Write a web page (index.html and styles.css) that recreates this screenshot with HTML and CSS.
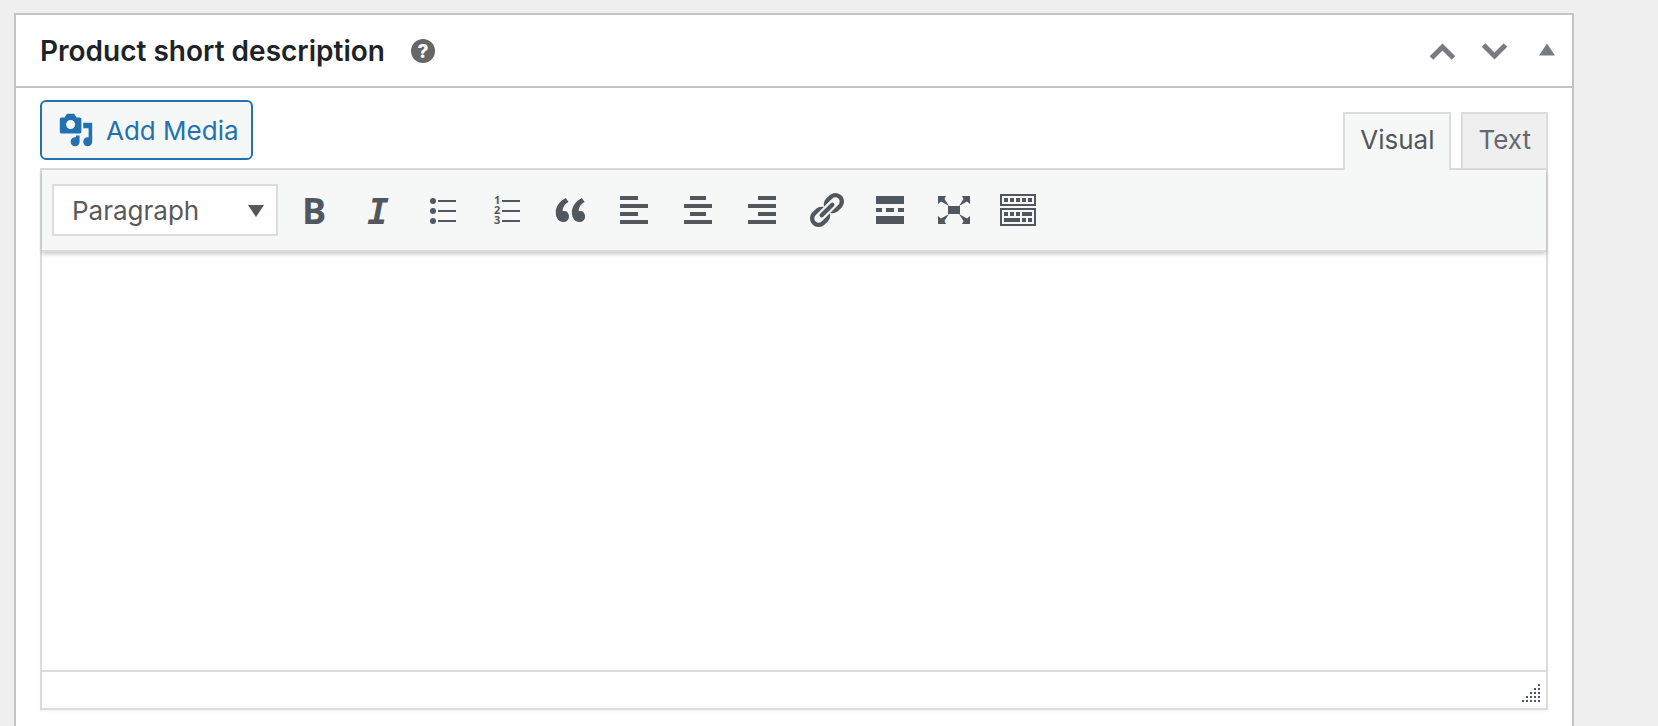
FILE: index.html
```html
<!DOCTYPE html>
<html lang="en">
<head>
    <meta charset="UTF-8">
    <meta name="viewport" content="width=device-width, initial-scale=1.0">
    <title>Product short description</title>
    <link rel="stylesheet" href="styles.css">
</head>
<body>
    <section class="postbox">
        <header class="postbox-header">
            <h2>Product short description</h2>
            <button type="button" class="help-tip" aria-label="Help">
                <svg width="24" height="24" viewBox="0 0 24 24">
                    <circle cx="12" cy="12" r="12"/>
                    <text x="12" y="19" text-anchor="middle">?</text>
                </svg>
            </button>
            <div class="handle-actions">
                <button type="button" aria-label="Move up">
                    <svg width="40" height="40" viewBox="0 0 40 40"><path d="M8.500 27L19.500 16l11 11" class="chevron"/></svg>
                </button>
                <button type="button" aria-label="Move down">
                    <svg width="40" height="40" viewBox="0 0 40 40"><path d="M8.500 14L19.500 25l11-11" class="chevron"/></svg>
                </button>
                <button type="button" aria-label="Toggle panel">
                    <svg width="40" height="40" viewBox="0 0 40 40"><path d="M12 24.500l8-12 8 12z"/></svg>
                </button>
            </div>
        </header>

        <div class="inside">
            <div class="editor-tools">
                <button type="button" class="add-media">
                    <svg width="36" height="36" viewBox="0 0 20 20"><path fill-rule="evenodd" d="M13 11V4c0-.55-.45-1-1-1h-1.670L9 1H5L3.670 3H2c-.55 0-1 .45-1 1v7c0 .55.45 1 1 1h10c.55 0 1-.45 1-1zM7 4.500c1.380 0 2.500 1.120 2.500 2.500S8.380 9.500 7 9.500 4.500 8.380 4.500 7 5.620 4.500 7 4.500zM14 6h5v10.500c0 1.380-1.120 2.500-2.500 2.500S14 17.880 14 16.500s1.120-2.500 2.500-2.500c.17 0 .34.020.5.050V9h-3V6zm-4 8.050V13h2v3.500c0 1.380-1.120 2.500-2.500 2.500S7 17.880 7 16.500 8.120 14 9.500 14c.17 0 .34.020.5.050z"/></svg>
                    Add Media
                </button>
                <div class="editor-tabs">
                    <button type="button" class="tab active">Visual</button>
                    <button type="button" class="tab">Text</button>
                </div>
            </div>

            <div class="editor">
                <div class="toolbar">
                    <div class="format">
                        <select aria-label="Format">
                            <option>Paragraph</option>
                            <option>Heading 1</option>
                            <option>Heading 2</option>
                        </select>
                        <svg width="16" height="12" viewBox="0 0 16 12"><path d="M0 0h16L8 12z"/></svg>
                    </div>
                    <button type="button" aria-label="Bold">
                        <svg width="40" height="40" viewBox="0 0 40 40"><text x="20" y="34" text-anchor="middle" class="bold">B</text></svg>
                    </button>
                    <button type="button" aria-label="Italic">
                        <svg width="40" height="40" viewBox="0 0 40 40"><text x="20" y="34" text-anchor="middle" class="italic">I</text></svg>
                    </button>
                    <button type="button" aria-label="Bulleted list">
                        <svg width="40" height="40" viewBox="0 0 40 40">
                            <circle cx="11" cy="11" r="3"/><circle cx="11" cy="21" r="3"/><circle cx="11" cy="31" r="3"/>
                            <path d="M16 10h18v2H16zM16 20h18v2H16zM16 30h18v2H16z"/>
                        </svg>
                    </button>
                    <button type="button" aria-label="Numbered list">
                        <svg width="40" height="40" viewBox="0 0 40 40">
                            <text x="8" y="14" class="digit">1</text><text x="8" y="24" class="digit">2</text><text x="8" y="34" class="digit">3</text>
                            <path d="M16 10h18v2H16zM16 20h18v2H16zM16 30h18v2H16z"/>
                        </svg>
                    </button>
                    <button type="button" aria-label="Blockquote">
                        <svg width="40" height="40" viewBox="0 0 20 20"><path d="M9.490 13.220c0-.74-.2-1.380-.61-1.900-.62-.78-1.830-.88-2.530-.72-.29-1.650 1.110-3.750 2.920-4.650L7.880 4c-2.730 1.300-5.420 4.280-4.960 8.050C3.210 14.430 4.590 16 6.540 16c.85 0 1.560-.25 2.120-.75s.83-1.180.83-2.030zm8.050 0c0-.74-.2-1.380-.61-1.900-.63-.78-1.830-.88-2.530-.72-.29-1.650 1.110-3.750 2.920-4.650L15.930 4c-2.730 1.300-5.410 4.280-4.950 8.050.28 2.380 1.660 3.950 3.610 3.950.85 0 1.560-.25 2.120-.75s.83-1.180.83-2.030z"/></svg>
                    </button>
                    <button type="button" aria-label="Align left">
                        <svg width="40" height="40" viewBox="0 0 40 40"><path d="M6 6h18v4H6zM6 14h28v4H6zM6 22h18v4H6zM6 30h28v4H6z"/></svg>
                    </button>
                    <button type="button" aria-label="Align center">
                        <svg width="40" height="40" viewBox="0 0 40 40"><path d="M12 6h16v4H12zM6 14h28v4H6zM12 22h16v4H12zM6 30h28v4H6z"/></svg>
                    </button>
                    <button type="button" aria-label="Align right">
                        <svg width="40" height="40" viewBox="0 0 40 40"><path d="M16 6h18v4H16zM6 14h28v4H6zM16 22h18v4H16zM6 30h28v4H6z"/></svg>
                    </button>
                    <button type="button" aria-label="Insert link">
                        <svg width="40" height="40" viewBox="0 0 20 20"><path d="M17.740 2.760c1.680 1.690 1.680 4.410 0 6.100l-1.530 1.520c-1.120 1.120-2.700 1.470-4.140 1.090l2.620-2.610.76-.77.76-.76c.84-.84.84-2.200 0-3.040-.84-.85-2.200-.85-3.040 0l-.77.76-3.380 3.380c-.37-1.440-.02-3.020 1.100-4.140l1.520-1.530c1.690-1.680 4.420-1.680 6.100 0zM8.590 13.430l5.340-5.340c.42-.42.42-1.100 0-1.520-.44-.43-1.130-.39-1.530 0l-5.330 5.340c-.42.42-.42 1.100 0 1.520.44.43 1.130.39 1.520 0zm-.76 2.290l4.140-4.150c.38 1.440.03 3.020-1.090 4.140l-1.520 1.530c-1.690 1.680-4.410 1.680-6.100 0-1.680-1.680-1.680-4.420 0-6.100l1.530-1.520c1.120-1.120 2.700-1.470 4.140-1.100l-4.140 4.150c-.85.84-.85 2.200 0 3.050.84.84 2.200.84 3.040 0z"/></svg>
                    </button>
                    <button type="button" aria-label="Insert Read More tag">
                        <svg width="40" height="40" viewBox="0 0 40 40"><path d="M6 6h28v8H6zM6 18h6v4H6zM16 18h8v4h-8zM28 18h6v4h-6zM6 26h28v8H6z"/></svg>
                    </button>
                    <button type="button" aria-label="Fullscreen">
                        <svg width="40" height="40" viewBox="0 0 40 40"><path d="M14 16h12v8H14zM4 6h8l-1.500 3L15 16l-8-4.500L4 14zM36 6h-8l1.500 3L25 16l8-4.500 3 2.500zM4 34h8l-1.500-3L15 24l-8 4.500L4 26zM36 34h-8l1.500-3L25 24l8 4.500 3-2.500z"/></svg>
                    </button>
                    <button type="button" aria-label="Toolbar Toggle">
                        <svg width="40" height="40" viewBox="0 0 40 40">
                            <path fill-rule="evenodd" d="M2 4h36v12H2zM4 6v8h32V6zM2 18h36v18H2zM4 20v14h32V20z"/>
                            <path d="M6 8h4v4H6zM12 8h4v4h-4zM18 8h4v4h-4zM24 8h4v4h-4zM30 8h4v4h-4zM6 22h4v4H6zM12 22h4v4h-4zM18 22h4v4h-4zM24 22h10v4H24zM6 28h16v4H6zM24 28h4v4h-4zM30 28h4v4h-4z"/>
                        </svg>
                    </button>
                </div>
                <textarea class="content" aria-label="Product short description"></textarea>
                <div class="statusbar">
                    <svg width="18" height="18" viewBox="0 0 18 18"><path d="M16 0h2v2h-2zM12 4h2v2h-2zM16 4h2v2h-2zM8 8h2v2H8zM12 8h2v2h-2zM16 8h2v2h-2zM4 12h2v2H4zM8 12h2v2H8zM12 12h2v2h-2zM16 12h2v2h-2zM0 16h2v2H0zM4 16h2v2H4zM8 16h2v2H8zM12 16h2v2h-2zM16 16h2v2h-2z"/></svg>
                </div>
            </div>
        </div>
    </section>
</body>
</html>
```
FILE: styles.css
```css
* {
    box-sizing: border-box;
}
html {
    height: 100%;
}
body {
    min-height: 100%;
    margin: 0;
    padding: 13px 84px 0 14px;
    display: flex;
    background: #efefef;
    color: #1d2327;
    font-family: Inter, "Liberation Sans", sans-serif;
    font-size: 26px;
}
button, select, textarea {
    font: inherit;
    color: inherit;
}
button {
    padding: 0;
    border: 0;
    background: none;
    cursor: pointer;
}
svg {
    display: block;
    overflow: visible;
    fill: currentColor;
}
.postbox {
    flex: 1;
    border: 2px solid #c3c4c7;
    border-bottom: 0;
    background: #fff;
}
.postbox-header {
    display: flex;
    align-items: center;
    height: 73px;
    padding-left: 24px;
    border-bottom: 2px solid #c3c4c7;
}
.postbox-header h2 {
    margin: 0;
    font-size: 28px;
    font-weight: 600;
    line-height: 40px;
}
.help-tip {
    margin-left: 26px;
    color: #666;
}
.help-tip text {
    fill: #fff;
    font-size: 19px;
    font-weight: 800;
}
.handle-actions {
    display: flex;
    gap: 12px;
    margin-left: auto;
    padding-right: 5px;
    color: #787c82;
}
.chevron {
    fill: none;
    stroke: currentColor;
    stroke-width: 5;
}
.inside {
    padding: 12px 24px 16px;
}
.editor-tools {
    display: flex;
    justify-content: space-between;
    align-items: flex-start;
}
.add-media {
    display: flex;
    align-items: center;
    gap: 12px;
    height: 60px;
    margin-bottom: 8px;
    padding: 0 12px 0 16px;
    border: 2px solid #2271b1;
    border-radius: 6px;
    background: #f6f7f7;
    color: #2271b1;
}
.editor-tabs {
    display: flex;
    align-self: flex-end;
    gap: 10px;
}
.tab {
    height: 56px;
    padding: 0 15px 4px;
    border: 2px solid #dcdcde;
    border-bottom: 0;
    background: #efefef;
    color: #646970;
}
/* the active tab runs over the toolbar's top border */
.tab.active {
    position: relative;
    z-index: 1;
    height: 58px;
    margin-bottom: -2px;
    padding-bottom: 6px;
    background: #f6f7f7;
    color: #50575e;
}
.editor {
    border: 2px solid #dcdcdc;
    box-shadow: 0 2px 2px rgba(0, 0, 0, 0.04);
}
.toolbar {
    display: flex;
    align-items: center;
    gap: 4px;
    height: 82px;
    padding: 0 10px;
    border-bottom: 2px solid #dcdcdc;
    background: #f6f7f7;
    box-shadow: 0 2px 4px rgba(0, 0, 0, 0.22);
    color: #50575e;
}
.toolbar button {
    display: flex;
    justify-content: center;
    align-items: center;
    width: 60px;
    height: 60px;
}
.format {
    display: grid;
    align-items: center;
    width: 226px;
    margin-right: 2px;
}
.format select, .format svg {
    grid-area: 1 / 1;
}
.format select {
    appearance: none;
    height: 52px;
    padding: 0 18px;
    border: 2px solid #dcdcde;
    border-radius: 0;
    background: #fff;
    color: #595959;
}
.format svg {
    justify-self: end;
    margin-top: 2px;
    margin-right: 14px;
    pointer-events: none;
}
.bold {
    font: bold 36px "Open Sans", sans-serif;
}
.italic {
    font: italic bold 36px "DejaVu Sans Mono", monospace;
}
.digit {
    font: bold 11px "Open Sans", sans-serif;
}
.content {
    display: block;
    width: 100%;
    height: 418px;
    padding: 20px;
    border: 0;
    outline: 0;
    resize: none;
    background: transparent;
}
.statusbar {
    display: flex;
    justify-content: flex-end;
    align-items: flex-end;
    height: 38px;
    padding: 6px;
    border-top: 2px solid #dcdcdc;
    color: #50575e;
}
```
